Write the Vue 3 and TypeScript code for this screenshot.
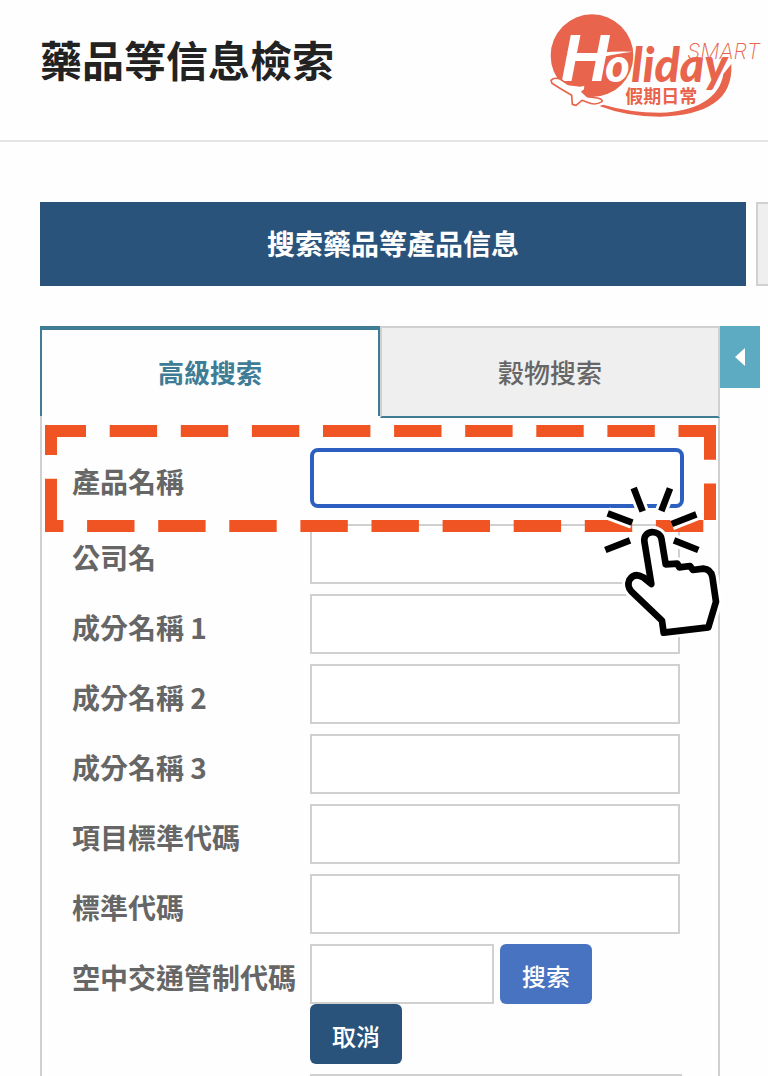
<script setup lang="ts">
import { ref } from 'vue'

interface Field {
  id: string
  label: string
}

const fields: Field[] = [
  { id: 'company', label: '公司名' },
  { id: 'ingredient-1', label: '成分名稱 1' },
  { id: 'ingredient-2', label: '成分名稱 2' },
  { id: 'ingredient-3', label: '成分名稱 3' },
  { id: 'item-code', label: '項目標準代碼' },
  { id: 'standard-code', label: '標準代碼' },
]

const tabs: string[] = ['高級搜索', '穀物搜索']
const activeTab = ref(0)
const values = ref<Record<string, string>>({})
</script>

<template>
  <div class="page">
    <header class="header">
      <h1 class="title">藥品等信息檢索</h1>
      <svg class="logo" viewBox="0 0 684 390" role="img" aria-label="Holiday Smart 假期日常">
        <circle cx="156" cy="167" r="124" fill="#e8644c" />
        <text class="initial" x="62" y="242" font-size="200" fill="#fff">H</text>
        <path d="M130 166Q200 151 278 155Q215 162 140 182Z" fill="#fff" />
        <text class="script" y="247" font-size="140"><tspan x="196" fill="#fff">o</tspan><tspan x="274" fill="#e8644c">liday</tspan></text>
        <path d="M574 192C580 300 500 346 360 350Q260 350 178 318L190 314Q270 338 360 338C470 336 540 292 550 222Z" fill="#e8644c" />
        <path class="plane" d="M33 241Q42 231 60 237L84 253L120 258L136 254L134 270L126 275L142 290L172 294Q190 298 186 305Q166 318 142 307L126 301L108 316L97 313L95 286L62 266L36 250Z" />
        <text class="smart" x="441" y="178" font-size="64" fill="#e8644c">SMART</text>
        <text class="sub" x="256" y="309" font-size="54" fill="#e8644c">假期日常</text>
      </svg>
    </header>

    <main class="content">
      <div class="banners">
        <h2 class="banner">搜索藥品等產品信息</h2>
        <div class="banner-next"></div>
      </div>

      <div class="search">
        <section class="panel">
          <div class="tabs" role="tablist">
            <button
              v-for="(tab, i) in tabs"
              :key="tab"
              type="button"
              role="tab"
              class="tab"
              :class="{ active: i === activeTab }"
              :aria-selected="i === activeTab"
              @click="activeTab = i"
            >{{ tab }}</button>
          </div>

          <form class="form" @submit.prevent>
            <div class="row first">
              <label for="product">產品名稱</label>
              <input id="product" v-model="values.product" class="box focused" type="text" />
            </div>
            <div v-for="field in fields" :key="field.id" class="row">
              <label :for="field.id">{{ field.label }}</label>
              <input :id="field.id" v-model="values[field.id]" class="box" type="text" />
            </div>
            <div class="row">
              <label for="atc">空中交通管制代碼</label>
              <div class="group">
                <input id="atc" v-model="values.atc" class="box short" type="text" />
                <button type="submit" class="btn">搜索</button>
                <button type="reset" class="btn dark">取消</button>
              </div>
            </div>
            <div class="row">
              <span></span>
              <select class="box wide" aria-label="代碼"></select>
            </div>
          </form>

          <svg class="marker" aria-hidden="true">
            <line x1="0" y1="6" x2="671" y2="6" stroke-dashoffset="6.4" />
            <line x1="0" y1="101" x2="671" y2="101" stroke-dashoffset="29" />
            <line x1="6" y1="0" x2="6" y2="96" stroke-dashoffset="17.4" />
            <line x1="665" y1="0" x2="665" y2="95" stroke-dashoffset="12.7" />
          </svg>

          <svg class="pointer" viewBox="0 0 450 540" aria-hidden="true">
            <defs>
              <path id="rays" d="M131 54L158 124M240 55L214 123M53 130L127 158M319 133L245 162M46 240L120 211M325 240L252 211" />
              <path id="hand" d="M184 342L163 214C159 178 212 178 215 210L227 283L262 281L268 292L300 288L309 300L340 296Q362 298 367 320L378 395L355 472L221 488L216 452L124 364Q110 348 118 330Q132 306 160 322Z" />
            </defs>
            <g class="halo"><use href="#rays" /><use href="#hand" /></g>
            <g class="ink"><use href="#rays" /><use href="#hand" /></g>
          </svg>
        </section>

        <button type="button" class="toggle" aria-label="收合">
          <svg viewBox="0 0 12 20" aria-hidden="true"><path d="M11 1V19L1 10Z" fill="#fff" /></svg>
        </button>
      </div>
    </main>
  </div>
</template>

<style>
body {
  background: #fefefe;
}
</style>

<style scoped>
.page {
  height: 100vh;
  overflow: hidden;
  font-family: "Noto Sans CJK TC", "Noto Sans", sans-serif;
  color: #666;
}
.page * {
  box-sizing: border-box;
}
.header {
  display: flex;
  justify-content: space-between;
  align-items: flex-start;
  height: 142px;
  padding-left: 40px;
  border-bottom: 2px solid #e5e5e5;
}
.title {
  margin: 28px 0 0;
  font-size: 42px;
  line-height: 62px;
  font-weight: 700;
  color: #222;
}
.logo {
  width: 228px;
  height: 130px;
}
.script {
  font-family: Lato, sans-serif;
  font-weight: 900;
  font-style: italic;
}
.initial {
  font-family: "Liberation Sans", sans-serif;
  font-weight: 700;
  font-style: italic;
}
.smart {
  font-family: Inter, sans-serif;
  font-weight: 200;
  font-style: italic;
}
.sub {
  font-weight: 700;
}
.plane {
  fill: #fff;
  stroke: #e8644c;
  stroke-width: 5;
  stroke-linejoin: round;
}
.content {
  padding: 60px 0 0 40px;
}
.banners {
  display: flex;
  gap: 10px;
  height: 84px;
}
.banner {
  flex: 1;
  margin: 0;
  padding-bottom: 2px;
  background: #29537a;
  color: #fff;
  font-size: 28px;
  line-height: 82px;
  font-weight: 700;
  text-align: center;
}
.banner-next {
  flex: 0 0 12px;
  background: #efefef;
  border: 2px solid #d0d0d0;
  border-right: 0;
}
.search {
  display: flex;
  align-items: flex-start;
  margin: 40px 8px 0 0;
}
.panel {
  position: relative;
  flex: 1;
}
.tabs {
  display: flex;
  height: 92px;
}
.tab {
  flex: 1;
  margin: 0;
  padding: 0;
  border: 2px solid #d0d0d0;
  border-bottom-color: #3f7c96;
  border-radius: 0;
  background: #efefef;
  color: #666;
  font: 500 26px/38px "Noto Sans CJK TC", sans-serif;
}
.tab.active {
  height: 90px;
  padding-bottom: 2px;
  border: 2px solid #3f7c96;
  border-top-width: 4px;
  border-bottom: 0;
  background: #fefefe;
  color: #3f7c96;
  font-weight: 700;
}
.form {
  display: flex;
  flex-direction: column;
  gap: 10px;
  margin-top: -2px;
  padding: 32px 0 0 30px;
  border: 2px solid #d0d0d0;
  border-top: 0;
}
.row {
  display: grid;
  grid-template-columns: 238px 1fr;
  align-items: start;
}
.row.first {
  margin-bottom: 6px;
}
label {
  padding-top: 8px;
  font-size: 28px;
  line-height: 50px;
  font-weight: 700;
  white-space: nowrap;
}
.box {
  width: 370px;
  height: 60px;
  margin: 0;
  padding: 0 12px;
  border: 2px solid #d0d0d0;
  border-radius: 0;
  background: #fff;
  font: 400 24px/36px "Noto Sans CJK TC", sans-serif;
  outline: none;
}
.box.focused {
  width: 374px;
  border: 4px solid #2d5fc0;
  border-radius: 8px;
}
.box.short {
  width: 184px;
}
.box.wide {
  width: 372px;
}
.group {
  display: flex;
  flex-wrap: wrap;
  column-gap: 6px;
  width: 370px;
}
.btn {
  width: 92px;
  height: 60px;
  padding: 4px 0 0;
  border: 0;
  border-radius: 6px;
  background: #4873c0;
  color: #fff;
  font: 500 24px/36px "Noto Sans CJK TC", sans-serif;
}
.btn.dark {
  background: #29537a;
}
.marker {
  position: absolute;
  left: 5px;
  top: 99px;
  width: 671px;
  height: 107px;
  pointer-events: none;
}
.marker line {
  stroke: #f05423;
  stroke-width: 12;
  stroke-dasharray: 47.4 23.7;
}
.pointer {
  position: absolute;
  left: 550px;
  top: 144px;
  width: 150px;
  height: 180px;
  pointer-events: none;
}
.halo {
  fill: #fff;
  stroke: #fff;
  stroke-width: 38;
  stroke-linejoin: round;
}
.ink {
  fill: #fff;
  stroke: #000;
  stroke-width: 20;
  stroke-linejoin: round;
}
.toggle {
  display: flex;
  align-items: center;
  justify-content: center;
  width: 40px;
  height: 62px;
  padding: 0;
  border: 0;
  background: #5dabc3;
}
.toggle svg {
  width: 12px;
  height: 20px;
}
</style>
